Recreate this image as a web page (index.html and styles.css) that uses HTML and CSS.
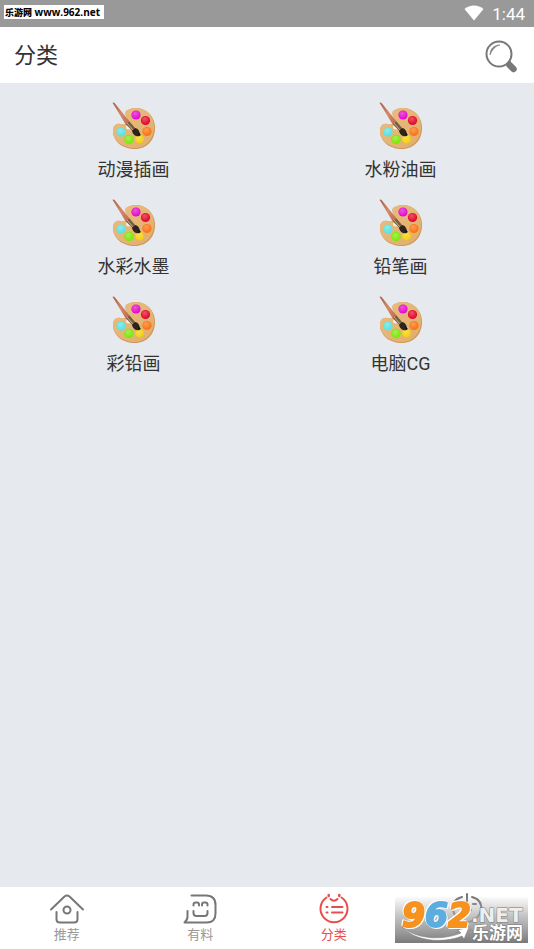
FILE: index.html
```
<!DOCTYPE html>
<html lang="zh-CN">
<head>
<meta charset="utf-8">
<meta name="viewport" content="width=device-width, initial-scale=1">
<title>分类</title>
<link rel="stylesheet" href="styles.css">
</head>
<body>
<svg class="defs" aria-hidden="true">
  <defs>
    <linearGradient id="wood" x1="0" y1="0" x2="1" y2="1">
      <stop offset="0" stop-color="#ebbd7e"/><stop offset="1" stop-color="#dfae6e"/>
    </linearGradient>
    <linearGradient id="handle" x1="0" y1="0" x2="1" y2="1">
      <stop offset="0" stop-color="#a85c43"/><stop offset=".5" stop-color="#d58a67"/><stop offset="1" stop-color="#b9694b"/>
    </linearGradient>
    <radialGradient id="shine" cx=".4" cy=".3" r=".7">
      <stop offset="0" stop-color="#fff" stop-opacity=".3"/><stop offset="1" stop-color="#fff" stop-opacity="0"/>
    </radialGradient>
    <symbol id="palette" viewBox="0 0 48 48">
      <path d="M16 9C22 5 30 5 36 9c6 4 9 10 9 17 0 12-8 21-20 21C12 47 3 39 3 29c0-5 3-8 7-7 3 1 7 0 8-3 0-3-4-6-2-10z" fill="#cf9759"/>
      <path d="M16 9C22 5 30 5 36 9c6 4 8 10 8 16 0 12-8 21-19 21C12 46 3 38 3 29c0-5 3-8 7-7 3 1 7 0 8-3 0-3-4-6-2-10z" fill="url(#wood)"/>
      <ellipse cx="19" cy="25" rx="3" ry="2.5" fill="#f5eee5"/>
      <g>
        <circle cx="26" cy="13" r="4.600" fill="#e40bd0"/><circle cx="35.500" cy="18.500" r="4.600" fill="#e3082d"/>
        <circle cx="37" cy="29.500" r="4.600" fill="#fb7312"/><circle cx="29.500" cy="37" r="4.400" fill="#f6d00d"/>
        <circle cx="19" cy="37.500" r="4.700" fill="#7bea09"/><circle cx="11" cy="30" r="4.600" fill="#58e3e4"/>
      </g>
      <g fill="url(#shine)">
        <circle cx="26" cy="13" r="4"/><circle cx="35.500" cy="18.500" r="4"/><circle cx="37" cy="29.500" r="4"/>
        <circle cx="29.500" cy="37" r="4"/><circle cx="19" cy="37.500" r="4"/><circle cx="11" cy="30" r="4"/>
      </g>
      <path d="M3 1.500C2 0 4 0 5 1.500L20 20l-4 3z" fill="url(#handle)"/>
      <path d="M16 22.500l3.500-3 6 7-3 2.500z" fill="#775d41"/>
      <path d="M17 21l6 7" stroke="#c7ad83" stroke-width="1"/>
      <path d="M22 28.500l3.500-2.500c3 1 5 4 4 8-3 1-7-1-7.500-5.500z" fill="#2e2519"/>
      <path d="M28 30l3 3-2 1z" fill="#110f0c"/>
    </symbol>
  </defs>
</svg>

<div class="status">
  <span class="site-tag"><b>乐游网</b> www.962.net</span>
  <div class="status-info">
    <svg class="wifi" viewBox="0 0 20 16" aria-hidden="true"><path d="M10 15.500L.5 4C5.500-.8 14.500-.8 19.500 4z" fill="#fff"/></svg>
    <time>1:44</time>
  </div>
</div>

<header class="header">
  <h1>分类</h1>
  <button class="search" type="button" aria-label="搜索">
    <svg viewBox="0 0 34 34" aria-hidden="true">
      <path d="M22 23l3-3 2 2.500-2.500 2.500z" fill="#77787b"/>
      <path d="M25.500 26l4 4" stroke="#77787b" stroke-width="6.500" stroke-linecap="round"/>
      <circle cx="15" cy="15" r="12.500" fill="#fff" stroke="#77787b" stroke-width="2"/>
      <path d="M6 16c0-6 4-10 10-10-5 1-8 5-10 10z" fill="#77787b" stroke="#77787b" stroke-width=".6"/>
    </svg>
  </button>
</header>

<main class="categories">
  <a class="category" href="#"><svg viewBox="0 0 48 48" aria-hidden="true"><use href="#palette"/></svg><span>动漫插画</span></a>
  <a class="category" href="#"><svg viewBox="0 0 48 48" aria-hidden="true"><use href="#palette"/></svg><span>水粉油画</span></a>
  <a class="category" href="#"><svg viewBox="0 0 48 48" aria-hidden="true"><use href="#palette"/></svg><span>水彩水墨</span></a>
  <a class="category" href="#"><svg viewBox="0 0 48 48" aria-hidden="true"><use href="#palette"/></svg><span>铅笔画</span></a>
  <a class="category" href="#"><svg viewBox="0 0 48 48" aria-hidden="true"><use href="#palette"/></svg><span>彩铅画</span></a>
  <a class="category" href="#"><svg viewBox="0 0 48 48" aria-hidden="true"><use href="#palette"/></svg><span>电脑CG</span></a>
</main>

<nav class="tabs">
  <a class="tab" href="#">
    <svg viewBox="0 0 36 32" aria-hidden="true"><path d="M2 16.500L15.500 3.500q2.500-2 5 0L34 16.500M7.500 19v7q0 3.500 3.500 3.500h14q3.500 0 3.500-3.500v-7"/><circle cx="18" cy="17" r="3.500"/></svg>
    <span>推荐</span>
  </a>
  <a class="tab" href="#">
    <svg viewBox="0 0 36 32" aria-hidden="true"><path d="M9.500 2.500H24q9.500 0 9.500 9.500v8.500q0 9-9 9H2.500q3-2.500 3-6V18M11.500 12.500v-1q0-2 2-2h1.500q2 0 2 2v1M20 12.500v-1q0-2 2-2h1.500q2 0 2 2v1M11.500 18v2q0 3 3 3h8q3 0 3-3v-2"/></svg>
    <span>有料</span>
  </a>
  <a class="tab active" href="#" aria-current="page">
    <svg viewBox="0 0 36 32" aria-hidden="true"><path d="M10.500 4.500a13.500 13.500 0 1 0 15 0M14.500 6q3.500 3.500 7 0"/><path d="M10.500 14h1M16 14h10.500M10.500 19.500h1M16 19.500h10.500" stroke-width="2"/><path d="M12.700 2v1M23.300 2v1" stroke-width="2.500"/></svg>
    <span>分类</span>
  </a>
  <a class="tab" href="#">
    <svg viewBox="0 0 36 32" aria-hidden="true"><path d="M18 1v7M13 4C6 6 3 11 4 17s7 12 14 12 13-6 14-12-2-11-9-13M9 11h3M24 11h3M14 17l4 4 4-4"/></svg>
    <span>我的</span>
  </a>
</nav>

<div class="watermark">
  <svg viewBox="0 0 133 46" role="img" aria-label="962.NET 乐游网">
    <defs><linearGradient id="plate" x1="0" y1="0" x2="0" y2="1"><stop offset="0" stop-color="#aaa" stop-opacity=".05"/><stop offset=".45" stop-color="#aaa" stop-opacity=".75"/><stop offset="1" stop-color="#777" stop-opacity=".98"/></linearGradient></defs>
    <path d="M0 0h133v46H0z" fill="url(#plate)"/>
    <path d="M7 30c14 12 40 14 59 6l-3-3 11-3-5 12-2-3C47 47 20 44 7 30z" fill="#fff" stroke="#777" stroke-width=".5"/>
    <g class="digits"><text class="orange" x="7" y="30">9</text><text class="blue" x="30" y="30">6</text><text class="orange" x="53" y="30">2</text></g>
    <text class="net" x="76" y="25">.NET</text>
    <text class="site" x="77" y="42">乐游网</text>
  </svg>
</div>
</body>
</html>
```
FILE: styles.css
```
* { box-sizing: border-box; }

body {
  position: relative;
  display: flex;
  flex-direction: column;
  min-height: 100vh;
  margin: 0;
  background: #e6e9ee;
  color: #333;
  font-family: Roboto, "Noto Sans CJK SC", sans-serif;
}

a { color: inherit; text-decoration: none; }

.defs { position: absolute; width: 0; height: 0; }

.status {
  display: flex;
  justify-content: space-between;
  align-items: flex-start;
  height: 27px;
  padding: 5px 9px 0 4px;
  background: #999;
}

.site-tag {
  height: 14px;
  padding: 0 4px 0 1px;
  background: #fff;
  color: #000;
  font: 700 10px/14px "Open Sans", "Noto Sans CJK SC", sans-serif;
}

.site-tag b { font-size: 9px; }

.status-info {
  display: flex;
  gap: 8px;
  color: #fff;
  font-size: 17px;
  line-height: 18px;
}

.wifi { width: 20px; height: 16px; }

.header {
  display: flex;
  justify-content: space-between;
  align-items: center;
  height: 56px;
  padding: 2px 16px 0 14px;
  background: #fff;
}

.header h1 {
  margin: 0;
  font-size: 22px;
  font-weight: 400;
  line-height: 32px;
}

.search {
  width: 34px;
  height: 34px;
  padding: 0;
  border: 0;
  background: none;
}

.search svg { display: block; }

.categories {
  display: grid;
  flex: 1;
  grid-template-columns: 1fr 1fr;
  grid-auto-rows: 97px;
  align-content: start;
  padding-top: 19px;
}

.category {
  display: flex;
  flex-direction: column;
  align-items: center;
  gap: 8px;
  font-size: 18px;
  line-height: 24px;
}

.category svg { width: 48px; height: 48px; }

.tabs {
  display: grid;
  grid-template-columns: repeat(4, 1fr);
  height: 62px;
  padding-top: 6px;
  background: #fff;
}

.tab {
  display: flex;
  flex-direction: column;
  align-items: center;
  color: #999;
  font-size: 13px;
  line-height: 20px;
}

.tab svg {
  width: 36px;
  height: 32px;
  fill: none;
  stroke: #777;
  stroke-width: 2;
  stroke-linecap: round;
  stroke-linejoin: round;
}

.tab.active { color: #e94e4b; }
.tab.active svg { stroke: #e94e4b; }

.watermark {
  position: absolute;
  right: 6px;
  bottom: 6px;
  width: 133px;
  height: 46px;
}

.watermark svg { display: block; }

.watermark text {
  stroke-linejoin: round;
  paint-order: stroke;
}

.digits {
  font: italic 700 33px "DejaVu Sans", sans-serif;
  stroke-width: 2;
  filter: drop-shadow(1px 1px 0 #fff) drop-shadow(-1px -1px 0 #fff);
}

.orange { fill: #f6921e; stroke: #f6921e; }
.blue { fill: #5badde; stroke: #5badde; }

.watermark .net {
  fill: #eee;
  stroke: #777;
  stroke-width: 1;
  font: 700 20px "DejaVu Sans", sans-serif;
}

.watermark .site {
  fill: #fff;
  stroke: #777;
  stroke-width: 1;
  font: 700 17px "Noto Sans CJK SC", sans-serif;
}
```
